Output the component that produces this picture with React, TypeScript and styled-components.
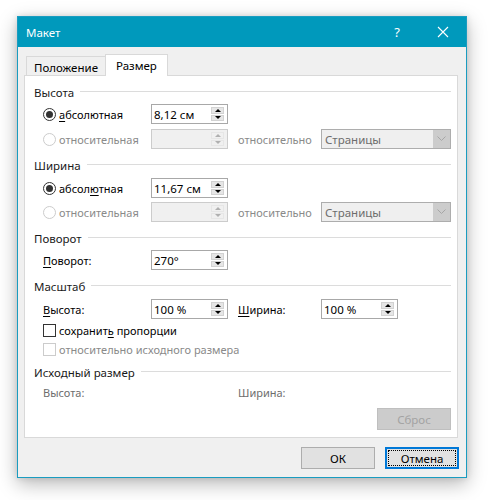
import React from "react";
import styled, { createGlobalStyle } from "styled-components";

const Global = createGlobalStyle`
  html, body { margin: 0; padding: 0; background: #ffffff; }
  body { font-family: "Noto Sans", "Open Sans", sans-serif; font-size: 11px; color: #000; }
  * { box-sizing: border-box; }
`;

const Page = styled.div`
  padding: 16px 0 0 17px;
  width: 488px;
  height: 500px;
`;

const Window = styled.div`
  width: 450px;
  height: 462px;
  border: 1px solid #1a9cc0;
  background: #f0f0f0;
  display: flex;
  flex-direction: column;
  box-shadow: 0 6px 18px rgba(0, 0, 0, 0.28), 0 0 6px rgba(0, 0, 0, 0.12);
`;

const TitleBar = styled.div`
  height: 30px;
  background: #0099bc;
  color: #fff;
  display: flex;
  align-items: center;
  padding-left: 8px;
  flex-shrink: 0;
`;

const Title = styled.div`
  flex: 1;
  font-size: 11.5px;
`;

const TitleButton = styled.div<{ $w: number }>`
  width: ${(p) => p.$w}px;
  height: 30px;
  display: flex;
  align-items: center;
  justify-content: center;
  font-size: 13px;
  color: #fff;
`;

const Body = styled.div`
  flex: 1;
  display: flex;
  flex-direction: column;
  padding: 7px 8px 8px 6px;
`;

const Tabs = styled.div`
  display: flex;
  align-items: flex-end;
  padding-left: 2px;
  height: 22px;
  margin-bottom: -1px;
  position: relative;
  z-index: 1;
`;

const Tab = styled.div<{ $active?: boolean }>`
  height: ${(p) => (p.$active ? 22 : 20)}px;
  padding: 0 ${(p) => (p.$active ? 10 : 7)}px;
  border: 1px solid #d9d9d9;
  border-bottom: ${(p) => (p.$active ? "none" : "1px solid #d9d9d9")};
  background: ${(p) => (p.$active ? "#ffffff" : "#f0f0f0")};
  margin-left: ${(p) => (p.$active ? "-1px" : "0")};
  display: flex;
  align-items: center;
  padding-top: ${(p) => (p.$active ? 0 : 2)}px;
  font-size: 11.5px;
`;

const Panel = styled.div`
  height: 363px;
  background: #fff;
  border: 1px solid #d9d9d9;
  padding: 8px 6px 7px 9px;
  display: flex;
  flex-direction: column;
`;

const Header = styled.div<{ $mt?: number }>`
  height: 16px;
  margin-top: ${(p) => p.$mt ?? 0}px;
  display: flex;
  align-items: center;
  gap: 6px;
  color: #1a1a1a;
  font-size: 11.5px;
  &::after {
    content: "";
    flex: 1;
    height: 1px;
    background: #dcdcdc;
    margin-top: -1px;
  }
`;

const Row = styled.div<{ $mt?: number; $h?: number }>`
  height: ${(p) => p.$h ?? 20}px;
  margin-top: ${(p) => p.$mt ?? 0}px;
  display: flex;
  align-items: center;
  padding-left: 9px;
`;

const LabelCell = styled.div<{ $w: number; $dim?: "off" | "muted" }>`
  width: ${(p) => p.$w}px;
  flex-shrink: 0;
  display: flex;
  align-items: center;
  color: ${(p) => (p.$dim === "off" ? "#8a8a8a" : p.$dim === "muted" ? "#6d6d6d" : "#000")};
  white-space: nowrap;
`;

const Radio = styled.span<{ $checked?: boolean; $disabled?: boolean }>`
  width: 13px;
  height: 13px;
  border-radius: 50%;
  border: 1px solid ${(p) => (p.$disabled ? "#cccccc" : "#333333")};
  margin-right: 3px;
  display: inline-flex;
  align-items: center;
  justify-content: center;
  flex-shrink: 0;
  &::after {
    content: "";
    width: 7px;
    height: 7px;
    border-radius: 50%;
    background: ${(p) => (p.$checked ? "#333333" : "transparent")};
  }
`;

const Check = styled.span<{ $disabled?: boolean }>`
  width: 13px;
  height: 13px;
  border: 1px solid ${(p) => (p.$disabled ? "#cccccc" : "#333333")};
  margin-right: 3px;
  flex-shrink: 0;
`;

const U = styled.span`
  text-decoration: underline;
  text-underline-offset: 2px;
`;

const Field = styled.div<{ $disabled?: boolean }>`
  width: 77px;
  height: 20px;
  flex-shrink: 0;
  border: 1px solid ${(p) => (p.$disabled ? "#cccccc" : "#a8a8a8")};
  background: ${(p) => (p.$disabled ? "#f0f0f0" : "#fff")};
  display: flex;
  align-items: stretch;
`;

const FieldText = styled.div`
  flex: 1;
  padding-left: 2px;
  display: flex;
  align-items: center;
  white-space: nowrap;
  font-size: 11.5px;
`;

const SpinCol = styled.div`
  width: 13px;
  margin: 2px 3px 2px 0;
  display: flex;
  flex-direction: column;
  gap: 1px;
`;

const SpinBtn = styled.div<{ $down?: boolean; $disabled?: boolean }>`
  flex: 1;
  background: ${(p) => (p.$disabled ? "#f0f0f0" : "#e6e6e6")};
  border: 1px solid ${(p) => (p.$disabled ? "#e6e6e6" : "#d2d2d2")};
  display: flex;
  align-items: center;
  justify-content: center;
  &::after {
    content: "";
    width: 0;
    height: 0;
    border-left: 3px solid transparent;
    border-right: 3px solid transparent;
    ${(p) =>
      p.$down
        ? `border-top: 3px solid ${p.$disabled ? "#b0b0b0" : "#000"};`
        : `border-bottom: 3px solid ${p.$disabled ? "#b0b0b0" : "#000"};`}
  }
`;

const Gap = styled.div<{ $w: number }>`
  width: ${(p) => p.$w}px;
  flex-shrink: 0;
`;

const Select = styled.div`
  width: 130px;
  height: 20px;
  border: 1px solid #adadad;
  background: #efefef;
  display: flex;
  align-items: stretch;
  color: #6d6d6d;
  font-size: 11.5px;
`;

const SelectText = styled.div`
  flex: 1;
  padding-left: 3px;
  display: flex;
  align-items: center;
`;

const SelectArrow = styled.div`
  width: 17px;
  background: #cccccc;
  display: flex;
  align-items: center;
  justify-content: center;
`;

const Button = styled.div<{ $variant?: "default" | "focus" | "disabled" }>`
  width: 74px;
  height: 22px;
  display: flex;
  align-items: center;
  justify-content: center;
  font-size: 11.5px;
  position: relative;
  background: ${(p) => (p.$variant === "disabled" ? "#cccccc" : "#e1e1e1")};
  color: ${(p) => (p.$variant === "disabled" ? "#a3a3a3" : "#000")};
  border: ${(p) =>
    p.$variant === "focus"
      ? "2px solid #0078d7"
      : p.$variant === "disabled"
      ? "1px solid #bfbfbf"
      : "1px solid #adadad"};
  ${(p) =>
    p.$variant === "focus"
      ? `&::before { content: ""; position: absolute; inset: 1px; border: 1px dotted #000; }`
      : ""}
`;

const RightRow = styled.div<{ $mt?: number }>`
  display: flex;
  justify-content: flex-end;
  gap: 10px;
  margin-top: ${(p) => p.$mt ?? 0}px;
`;

const Footer = styled.div`
  display: flex;
  justify-content: flex-end;
  gap: 10px;
  margin-top: 9px;
  margin-right: -1px;
`;

function Spin({ value, disabled }: { value?: string; disabled?: boolean }) {
  return (
    <Field $disabled={disabled}>
      <FieldText>{value}</FieldText>
      <SpinCol>
        <SpinBtn $disabled={disabled} />
        <SpinBtn $down $disabled={disabled} />
      </SpinCol>
    </Field>
  );
}

function Dropdown() {
  return (
    <Select>
      <SelectText>Страницы</SelectText>
      <SelectArrow>
        <svg width="9" height="6" viewBox="0 0 9 6">
          <path d="M0.5 0.5 L4.5 4.5 L8.5 0.5" fill="none" stroke="#a6a6a6" strokeWidth="1" />
        </svg>
      </SelectArrow>
    </Select>
  );
}

export default function App() {
  return (
    <Page>
      <Global />
      <Window>
        <TitleBar>
          <Title>Макет</Title>
          <TitleButton $w={46}>?</TitleButton>
          <TitleButton $w={46}>
            <svg width="12" height="12" viewBox="0 0 12 12">
              <path d="M1 1 L11 11 M11 1 L1 11" stroke="#fff" strokeWidth="1.1" />
            </svg>
          </TitleButton>
        </TitleBar>
        <Body>
          <Tabs>
            <Tab>Положение</Tab>
            <Tab $active>Размер</Tab>
          </Tabs>
          <Panel>
            <Header>Высота</Header>
            <Row $mt={4}>
              <LabelCell $w={108}>
                <Radio $checked />
                <span>
                  <U>а</U>бсолютная
                </span>
              </LabelCell>
              <Spin value="8,12 см" />
            </Row>
            <Row $mt={5}>
              <LabelCell $w={108} $dim="off">
                <Radio $disabled />
                <span>относительная</span>
              </LabelCell>
              <Spin disabled />
              <Gap $w={10} />
              <LabelCell $w={83} $dim="off">
                относительно
              </LabelCell>
              <Dropdown />
            </Row>

            <Header $mt={8}>Ширина</Header>
            <Row $mt={5}>
              <LabelCell $w={108}>
                <Radio $checked />
                <span>
                  абсол<U>ю</U>тная
                </span>
              </LabelCell>
              <Spin value="11,67 см" />
            </Row>
            <Row $mt={4}>
              <LabelCell $w={108} $dim="off">
                <Radio $disabled />
                <span>относительная</span>
              </LabelCell>
              <Spin disabled />
              <Gap $w={10} />
              <LabelCell $w={83} $dim="off">
                относительно
              </LabelCell>
              <Dropdown />
            </Row>

            <Header $mt={8}>Поворот</Header>
            <Row $mt={4}>
              <LabelCell $w={108}>
                <span>
                  <U>П</U>оворот:
                </span>
              </LabelCell>
              <Spin value="270°" />
            </Row>

            <Header $mt={8}>Масштаб</Header>
            <Row $mt={5}>
              <LabelCell $w={108}>
                <span>
                  <U>В</U>ысота:
                </span>
              </LabelCell>
              <Spin value="100 %" />
              <Gap $w={10} />
              <LabelCell $w={83}>
                <span>
                  <U>Ш</U>ирина:
                </span>
              </LabelCell>
              <Spin value="100 %" />
            </Row>
            <Row $mt={3} $h={16}>
              <LabelCell $w={300}>
                <Check />
                <span>
                  сохранит<U>ь</U> пропорции
                </span>
              </LabelCell>
            </Row>
            <Row $mt={3} $h={16}>
              <LabelCell $w={300} $dim="off">
                <Check $disabled />
                <span>относительно исходного размера</span>
              </LabelCell>
            </Row>

            <Header $mt={7}>Исходный размер</Header>
            <Row $mt={4} $h={16}>
              <LabelCell $w={195} $dim="muted">
                Высота:
              </LabelCell>
              <LabelCell $w={100} $dim="muted">
                Ширина:
              </LabelCell>
            </Row>
            <RightRow $mt={8}>
              <Button $variant="disabled">Сброс</Button>
            </RightRow>
          </Panel>
          <Footer>
            <Button>ОК</Button>
            <Button $variant="focus">Отмена</Button>
          </Footer>
        </Body>
      </Window>
    </Page>
  );
}
